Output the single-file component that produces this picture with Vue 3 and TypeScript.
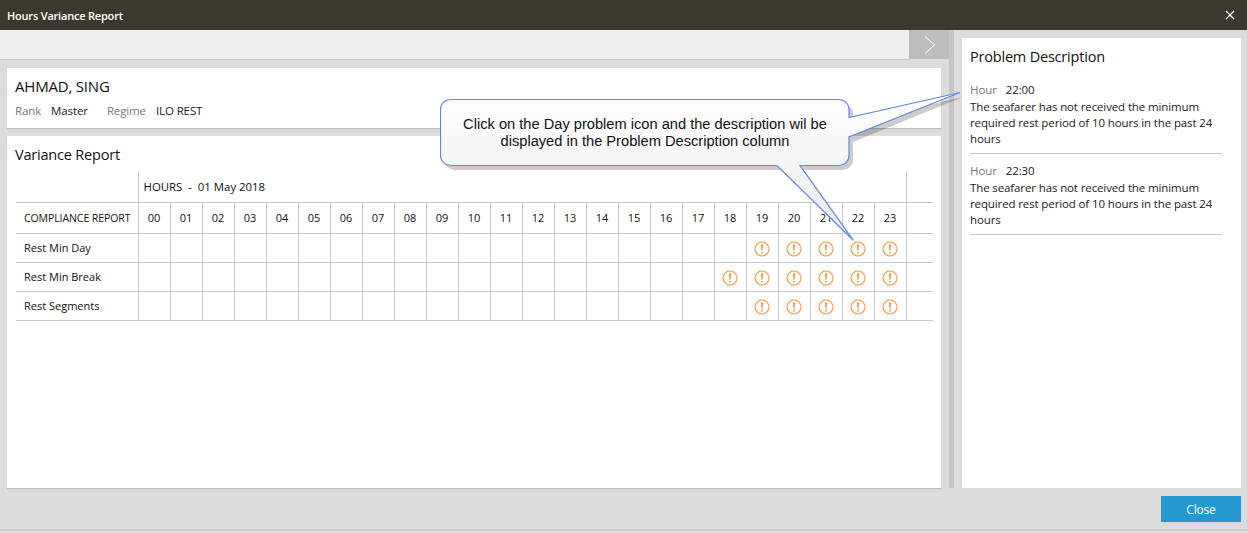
<script setup lang="ts">
const hours: string[] = Array.from({ length: 24 }, (_, i) => String(i).padStart(2, '0'))
const rows: { name: string; from: number }[] = [
  { name: 'Rest Min Day', from: 19 },
  { name: 'Rest Min Break', from: 18 },
  { name: 'Rest Segments', from: 19 },
]
const problems: string[] = ['22:00', '22:30']
</script>

<template>
  <div class="app">
    <header class="titlebar">
      <span class="title">Hours Variance Report</span>
      <svg class="x" width="10" height="10" viewBox="0 0 10 10"><path d="M1 1l8 8M9 1l-8 8" stroke="#fff" stroke-width="1.2" fill="none" /></svg>
    </header>
    <div class="body">
      <div class="left">
        <div class="toolbar">
          <div class="toolbar-fill"></div>
          <div class="chev">
            <svg width="14" height="20" viewBox="0 0 14 20"><path d="M2 1.500l9.500 8.500-9.500 8.500" stroke="#fff" stroke-width="1" fill="none" /></svg>
          </div>
        </div>
        <section class="card person">
          <h2 class="name">AHMAD, SING</h2>
          <div class="meta">
            <span class="lab">Rank</span><span class="val v1">Master</span>
            <span class="lab">Regime</span><span class="val">ILO REST</span>
          </div>
        </section>
        <section class="card report">
          <h2 class="rtitle">Variance Report</h2>
          <table class="grid">
            <colgroup>
              <col class="c0" />
              <col v-for="h in hours" :key="h" class="ch" />
              <col />
            </colgroup>
            <tbody>
              <tr class="r-top">
                <td class="first"></td>
                <td class="hrs" :colspan="24">HOURS &nbsp;-&nbsp; 01 May 2018</td>
                <td class="end"></td>
              </tr>
              <tr class="r-head">
                <td class="first comp">COMPLIANCE REPORT</td>
                <td v-for="h in hours" :key="h" class="num">{{ h }}</td>
                <td class="end"></td>
              </tr>
              <tr v-for="r in rows" :key="r.name" class="r-row">
                <td class="first">{{ r.name }}</td>
                <td v-for="(h, i) in hours" :key="h" class="cell">
                  <svg v-if="i >= r.from" class="warn" width="16" height="16" viewBox="0 0 16 16">
                    <circle cx="8" cy="8" r="7" fill="none" stroke="#f79433" stroke-width="1.1" />
                    <path d="M6.900 3.500h2.200l-.6 6.300h-1z" fill="#f79433" />
                    <rect x="7.200" y="10.900" width="1.600" height="1.600" fill="#f79433" />
                  </svg>
                </td>
                <td class="end"></td>
              </tr>
            </tbody>
          </table>
        </section>
      </div>
      <div class="splitter"></div>
      <aside class="panel">
        <h2 class="ptitle">Problem Description</h2>
        <div v-for="p in problems" :key="p" class="problem">
          <div class="phead"><span class="lab2">Hour</span><span>{{ p }}</span></div>
          <p class="ptext">The seafarer has not received the minimum required rest period of 10 hours in the past 24 hours</p>
        </div>
      </aside>
    </div>
    <footer class="footer">
      <button class="close" type="button">Close</button>
    </footer>

    <div class="callout">
      <svg class="callout-shape" width="540" height="170" viewBox="0 0 540 170">
        <defs>
          <linearGradient id="cg" x1="0" y1="0" x2="0" y2="1">
            <stop offset="0" stop-color="#ffffff" />
            <stop offset="1" stop-color="#ebebeb" />
          </linearGradient>
        </defs>
        <path d="M14.500 10.500H399a10 10 0 0 1 10 10V30L520 3.500 409 49v18a10 10 0 0 1-10 10H360L413 151 337 77H10.500a10 10 0 0 1-10-10V20.500a10 10 0 0 1 10-10z" transform="translate(4 4)" fill="#000" opacity=".2" />
        <path d="M10.500 10.500H399a10 10 0 0 1 10 10V28.500L520 3.500 409 48v18.500a10 10 0 0 1-10 10H360L413 151 337 76.500H10.500a10 10 0 0 1-10-10V20.500a10 10 0 0 1 10-10z" fill="url(#cg)" stroke="#6488dc" stroke-width="1.2" />
      </svg>
      <div class="callout-text">Click on the Day problem icon and the description wil be displayed in the Problem Description column</div>
    </div>
  </div>
</template>

<style scoped>
.app {
  position: relative;
  width: 1247px;
  height: 533px;
  overflow: hidden;
  background: #dcdcdc;
  display: flex;
  flex-direction: column;
  font-family: "Open Sans", "Noto Sans", sans-serif;
  font-size: 11.5px;
  color: #222;
}
.titlebar {
  height: 30px;
  flex: none;
  background: #3c3830;
  color: #fff;
  display: flex;
  align-items: center;
  justify-content: space-between;
  padding: 0 12px 0 7px;
}
.title { font-size: 11px; font-weight: 600; letter-spacing: -0.2px; }
.x { display: block; }
.body { display: flex; height: 458px; flex: none; }
.left { width: 949px; flex: none; display: flex; flex-direction: column; }
.toolbar { height: 30px; flex: none; display: flex; }
.toolbar-fill { flex: 1; background: #eeeeee; border-bottom: 1px solid #c8c8c8; }
.chev {
  width: 40px;
  background: #bdbdbd;
  display: flex;
  align-items: center;
  justify-content: center;
  height: 29px;
  padding-left: 2px;
  box-sizing: border-box;
}
.card {
  background: #fff;
  margin-left: 7px;
  width: 934px;
  box-shadow: 0 1px 1px #bdbdbd;
  box-sizing: border-box;
}
.person { height: 60px; margin-top: 8px; padding: 8px 8px 0; }
.name { margin: 0; font-size: 15px; font-weight: 400; line-height: 20px; letter-spacing: -0.2px; color: #111; }
.meta { margin-top: 7px; line-height: 16px; display: flex; letter-spacing: -0.12px; }
.lab { color: #777; }
.val { margin-left: 10px; color: #222; }
.v1 { margin-right: 19px; }
.report { height: 352px; margin-top: 8px; padding: 9px 0 0 8px; }
.rtitle { margin: 0; font-size: 14.500px; font-weight: 400; line-height: 20px; letter-spacing: -0.2px; color: #111; }
.grid {
  border-collapse: collapse;
  table-layout: fixed;
  width: 917px;
  margin: 7px 0 0 1px;
  font-size: 11px;
  color: #111;
}
.c0 { width: 122px; }
.ch { width: 32px; }
.grid td { padding: 0; border: 1px solid #c9c9c9; }
.r-top { height: 30px; }
.r-head { height: 31px; }
.r-row { height: 29px; }
.grid .first { border-left: none; padding-left: 8px; white-space: nowrap; }
.grid .end { border-right: none; }
.r-top .first { border-top: none; }
.r-top .hrs { border-top: none; padding-left: 5px; font-size: 11.400px; }
.r-top .end { border-top: none; }
.grid .comp { font-size: 10.500px; letter-spacing: -0.08px; }
.num, .cell { text-align: center; }
.warn { display: block; margin: 2px auto 0; }
.splitter { width: 5px; background: #c6c6c6; flex: none; }
.panel {
  width: 279px;
  flex: none;
  margin: 8px 0 0 8px;
  background: #fff;
  padding: 9px 8px 0;
  box-sizing: border-box;
}
.ptitle { margin: 0 0 14px; font-size: 14.500px; font-weight: 400; line-height: 20px; letter-spacing: -0.2px; color: #111; }
.problem {
  width: 252px;
  border-bottom: 1px solid #c9c9c9;
  padding-bottom: 6px;
  margin-bottom: 8px;
  line-height: 16px;
}
.phead { display: flex; gap: 9px; line-height: 18px; letter-spacing: -0.1px; }
.lab2 { color: #777; }
.ptext { margin: 0; letter-spacing: -0.12px; }
.footer {
  flex: none;
  height: 43px;
  box-sizing: border-box;
  border-bottom: 2px solid #cfcfcf;
  display: flex;
  justify-content: flex-end;
  padding: 8px 6px 0 0;
}
.close {
  width: 80px;
  height: 26px;
  border: none;
  background: #2399cf;
  color: #fff;
  font: inherit;
  font-size: 12px;
  letter-spacing: -0.2px;
  padding: 0;
}
.callout {
  position: absolute;
  left: 440px;
  top: 89px;
  width: 540px;
  height: 170px;
}
.callout-shape { position: absolute; left: 0; top: 0; display: block; }
.callout-text {
  position: absolute;
  left: 10px;
  top: 27px;
  width: 390px;
  text-align: center;
  font-family: "Liberation Sans", Arial, sans-serif;
  font-size: 14.650px;
  line-height: 17px;
  color: #111;
}
</style>
